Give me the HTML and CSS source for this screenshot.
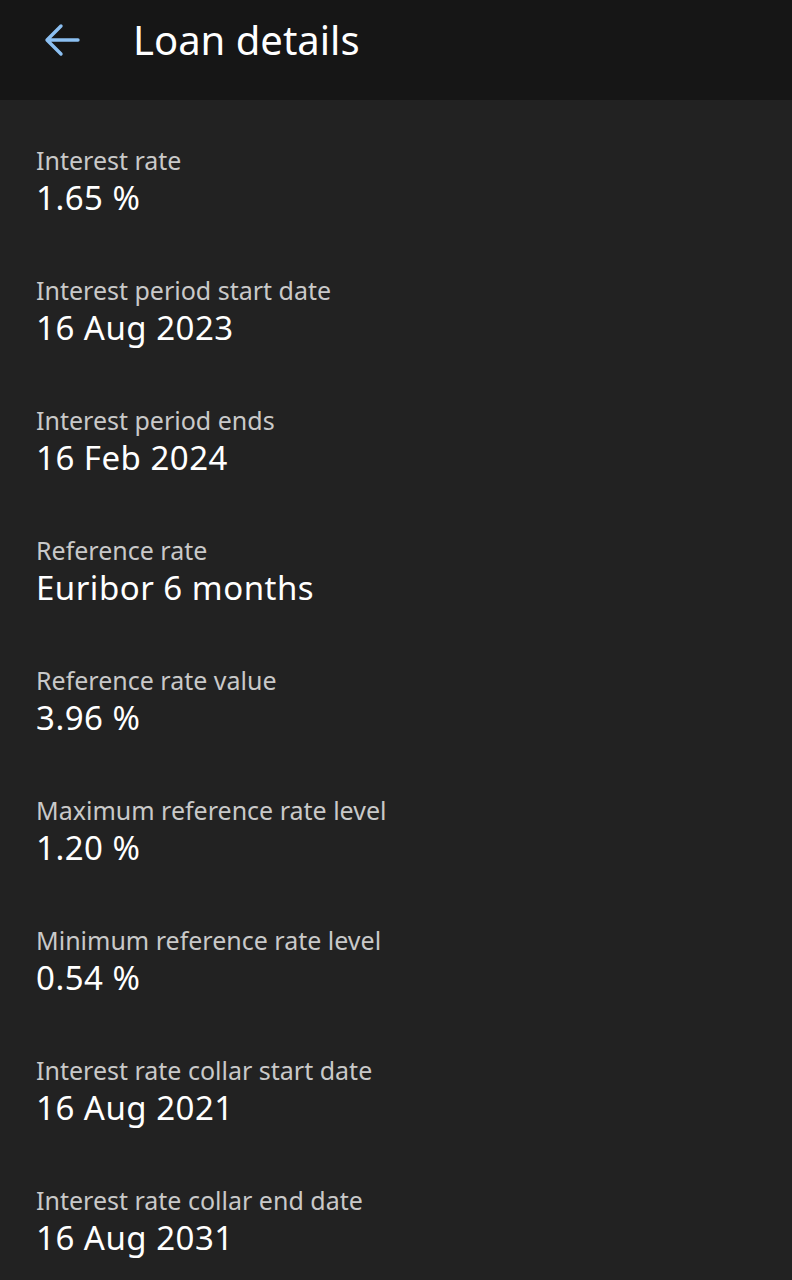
FILE: index.html
```html
<!DOCTYPE html>
<html lang="en">
<head>
<meta charset="utf-8">
<title>Loan details</title>
<link rel="stylesheet" href="styles.css">
</head>
<body>
<header class="topbar">
  <button class="back" aria-label="Back">
    <svg width="40" height="40" viewBox="0 0 40 40" aria-hidden="true">
      <path d="M36 20H6M19 6L5 20l14 14" fill="none" stroke="#8cc0f2" stroke-width="3.4" stroke-linecap="round" stroke-linejoin="round"/>
    </svg>
  </button>
  <h1 class="title">Loan details</h1>
</header>
<main class="details">
  <div class="item"><div class="label">Interest rate</div><div class="value">1.65 %</div></div>
  <div class="item"><div class="label">Interest period start date</div><div class="value">16 Aug 2023</div></div>
  <div class="item"><div class="label">Interest period ends</div><div class="value">16 Feb 2024</div></div>
  <div class="item"><div class="label">Reference rate</div><div class="value">Euribor 6 months</div></div>
  <div class="item"><div class="label">Reference rate value</div><div class="value">3.96 %</div></div>
  <div class="item"><div class="label">Maximum reference rate level</div><div class="value">1.20 %</div></div>
  <div class="item"><div class="label">Minimum reference rate level</div><div class="value">0.54 %</div></div>
  <div class="item"><div class="label">Interest rate collar start date</div><div class="value">16 Aug 2021</div></div>
  <div class="item"><div class="label">Interest rate collar end date</div><div class="value">16 Aug 2031</div></div>
</main>
</body>
</html>
```
FILE: styles.css
```css
html, body {
  margin: 0;
  padding: 0;
  background: #222222;
  font-family: "Noto Sans", "Open Sans", sans-serif;
  color: #ffffff;
}
.topbar {
  height: 100px;
  background: #161616;
  display: flex;
  align-items: center;
  padding-bottom: 20px;
  box-sizing: border-box;
}
.back {
  background: none;
  border: 0;
  padding: 0;
  margin-left: 42px;
  width: 40px;
  height: 40px;
  display: flex;
}
.title {
  margin: 0 0 0 51px;
  font-size: 40px;
  font-weight: 400;
  line-height: 48px;
  color: #ffffff;
}
.details {
  padding: 45px 36px 0;
  display: flex;
  flex-direction: column;
  gap: 57px;
}
.item {
  display: flex;
  flex-direction: column;
  gap: 3px;
}
.label {
  font-size: 25px;
  line-height: 30px;
  color: #c9c9c9;
}
.value {
  font-size: 33px;
  line-height: 40px;
  letter-spacing: 0.5px;
  color: #ffffff;
}
```
